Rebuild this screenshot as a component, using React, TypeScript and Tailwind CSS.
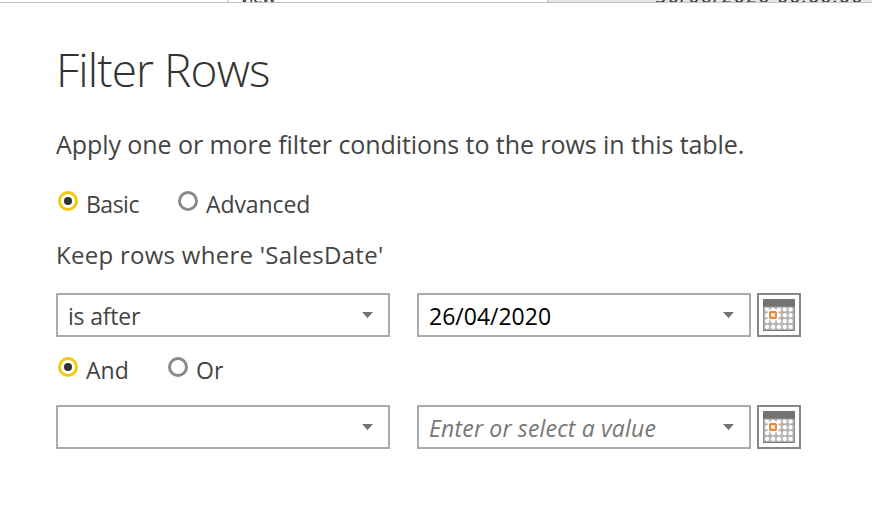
import React from "react";

const ui = "font-['Open_Sans','Noto_Sans',sans-serif]";

function Radio({ label, checked, width, spacing }: { label: string; checked?: boolean; width: string; spacing: string }) {
  return (
    <label className={`flex h-[34px] items-start ${width}`}>
      <span
        className={`mt-[2px] flex size-5 shrink-0 items-center justify-center rounded-full border-[3px] ${
          checked ? "border-[#f2c811]" : "border-[#8a8a8a]"
        }`}
      >
        {checked && <span className="size-2 rounded-full bg-[#333333]" />}
      </span>
      <span className={`-mt-[2px] ml-2 whitespace-nowrap text-[23px] leading-[34px] ${spacing}`}>{label}</span>
    </label>
  );
}

function Combo({ children, spacing = "" }: { children?: React.ReactNode; spacing?: string }) {
  return (
    <div className="flex h-11 w-[334px] items-center justify-between border-2 border-[#ababab] pl-[10px] pr-[15px]">
      <span className={`whitespace-nowrap pt-[2px] text-[23px] leading-[34px] ${spacing}`}>{children}</span>
      <svg className="h-[6px] w-[11px]" viewBox="0 0 11 6">
        <path d="M0 0h11L5.5 6z" fill="#737373" />
      </svg>
    </div>
  );
}

function CalendarButton() {
  const cols = [2, 8, 13.8, 19.6, 25.4];
  const rows = [8.4, 14.2, 20, 25.8];
  return (
    <button className="ml-[6px] flex size-11 items-center justify-center border-2 border-[#868686]">
      <svg className="size-8" viewBox="0 0 32 32">
        <rect width="32" height="32" fill="#737373" />
        <rect x="0.6" y="7.7" width="30.8" height="23.4" fill="#b4b4b4" />
        {rows.map((y) =>
          cols.map((x) => <rect key={`${x}-${y}`} x={x} y={y} width="4.2" height="4.2" rx="1.8" fill="#fff" />)
        )}
        <rect x="4.6" y="10.6" width="11" height="11" rx="2.5" fill="#fff" />
        <rect x="7.1" y="13.1" width="5.8" height="5.8" rx="0.5" fill="#fff" stroke="#ed8b3c" strokeWidth="2.2" />
      </svg>
    </button>
  );
}

export default function App() {
  return (
    <div className={`h-[527px] w-[872px] overflow-hidden bg-white text-[#444444] ${ui}`}>
      <div className="flex h-[3px] overflow-hidden border-b border-[#c4c4c4] text-[18px] leading-[18px] text-[#333]">
        <div className="w-[227px]" />
        <div className="w-[320px] border-l-2 border-[#d5d5d5] pl-[10px]">
          <span className="-mt-[13px] block tracking-[-0.8px]">View</span>
        </div>
        <div className="flex-1 border-l-2 border-[#d0d0d0] bg-[#e6e6e6] pr-[8px] text-right">
          <span className="-mt-[13px] block whitespace-nowrap text-[20px] italic tracking-[1.3px]">30/06/2020 00:00:00</span>
        </div>
      </div>
      <main className="flex flex-col pl-14">
        <h1 className="mt-[34px] h-[64px] whitespace-nowrap text-[46px] font-light leading-[64px] tracking-[-0.9px] text-[#333]">
          Filter Rows
        </h1>
        <p className="mt-[25px] h-[36px] whitespace-nowrap text-[25px] leading-[36px] tracking-[-0.065px]">
          Apply one or more filter conditions to the rows in this table.
        </p>
        <div className="mt-[27px] flex pl-[2px]">
          <Radio label="Basic" checked width="w-[120px]" spacing="tracking-[-0.5px]" />
          <Radio label="Advanced" width="w-[180px]" spacing="tracking-[-0.1px]" />
        </div>
        <p className="mt-[15px] h-[34px] whitespace-nowrap text-[24px] leading-[34px] tracking-[0.27px]">
          Keep rows where 'SalesDate'
        </p>
        <div className="mt-[21px] flex">
          <Combo spacing="tracking-[-0.2px]">is after</Combo>
          <div className="ml-[27px] flex text-black">
            <Combo>26/04/2020</Combo>
            <CalendarButton />
          </div>
        </div>
        <div className="mt-[18px] flex pl-[2px]">
          <Radio label="And" checked width="w-[110px]" spacing="" />
          <Radio label="Or" width="w-[100px]" spacing="" />
        </div>
        <div className="mt-[16px] flex">
          <Combo />
          <div className="ml-[27px] flex italic text-[#767676]">
            <Combo spacing="tracking-[0.18px]">Enter or select a value</Combo>
            <CalendarButton />
          </div>
        </div>
      </main>
    </div>
  );
}
